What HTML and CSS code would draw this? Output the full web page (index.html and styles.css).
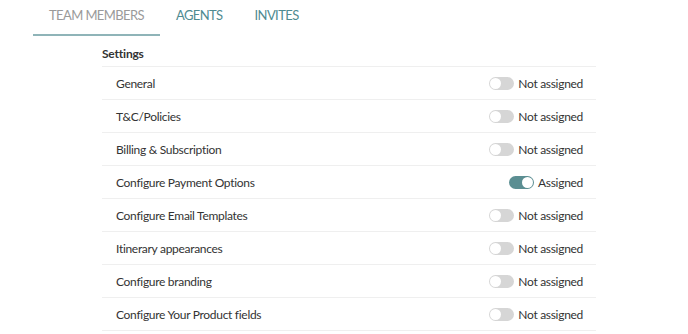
FILE: index.html
```html
<!DOCTYPE html>
<html lang="en">
<head>
    <meta charset="UTF-8">
    <meta name="viewport" content="width=device-width, initial-scale=1.0">
    <title>Team members</title>
    <link rel="stylesheet" href="styles.css">
</head>
<body>
    <!-- Abas -->
    <div class="tabs">
        <div class="tab active">TEAM MEMBERS</div>
        <div class="tab">AGENTS</div>
        <div class="tab">INVITES</div>
    </div>

    <div class="settings">
        <div class="settings-title">Settings</div>

        <div class="row">
            <span class="name">General</span>
            <span class="status"><span class="toggle"></span>Not assigned</span>
        </div>
        <div class="row">
            <span class="name">T&amp;C/Policies</span>
            <span class="status"><span class="toggle"></span>Not assigned</span>
        </div>
        <div class="row">
            <span class="name">Billing &amp; Subscription</span>
            <span class="status"><span class="toggle"></span>Not assigned</span>
        </div>
        <div class="row">
            <span class="name">Configure Payment Options</span>
            <span class="status"><span class="toggle on"></span>Assigned</span>
        </div>
        <div class="row">
            <span class="name">Configure Email Templates</span>
            <span class="status"><span class="toggle"></span>Not assigned</span>
        </div>
        <div class="row">
            <span class="name">Itinerary appearances</span>
            <span class="status"><span class="toggle"></span>Not assigned</span>
        </div>
        <div class="row">
            <span class="name">Configure branding</span>
            <span class="status"><span class="toggle"></span>Not assigned</span>
        </div>
        <div class="row">
            <span class="name">Configure Your Product fields</span>
            <span class="status"><span class="toggle"></span>Not assigned</span>
        </div>
    </div>
</body>
</html>
```

FILE: styles.css
```css
/* Estilos principais */
body {
    font-family: Lato, Arial, sans-serif;
    background: #fff;
    color: #333;
    margin: 0;
    padding: 0;
}
.tabs {
    display: flex;
    margin-left: 33px;
    padding-top: 5px;
}
.tab {
    padding: 0 16px;
    height: 29px;
    line-height: 20px;
    font-size: 13px;
    letter-spacing: -0.6px;
    color: #4f8b91;
    border-bottom: 2px solid transparent;
}
.tab.active {
    color: #9a9a9a;
    border-bottom-color: #8fb4b8;
}
.settings {
    width: 494px;
    margin-left: 102px;
    margin-top: 8px;
}
.settings-title {
    font-size: 12px;
    font-weight: 700;
    letter-spacing: -0.2px;
    color: #333;
    height: 22px;
    line-height: 20px;
    border-bottom: 1px solid #efefef;
}
.row {
    display: flex;
    justify-content: space-between;
    align-items: center;
    box-sizing: border-box;
    height: 33px;
    padding: 1px 13px 0 14px;
    border-bottom: 1px solid #efefef;
    font-size: 12px;
    letter-spacing: -0.3px;
    color: #333;
}
.status {
    display: flex;
    align-items: center;
}
.toggle {
    position: relative;
    width: 25px;
    height: 13px;
    border-radius: 7px;
    background: #d6d6d6;
    margin-right: 4px;
}
.toggle::after {
    content: "";
    position: absolute;
    top: 1px;
    left: 1px;
    width: 11px;
    height: 11px;
    border-radius: 50%;
    background: #fff;
}
.toggle.on {
    background: #5b8e92;
}
.toggle.on::after {
    left: 13px;
}
```
